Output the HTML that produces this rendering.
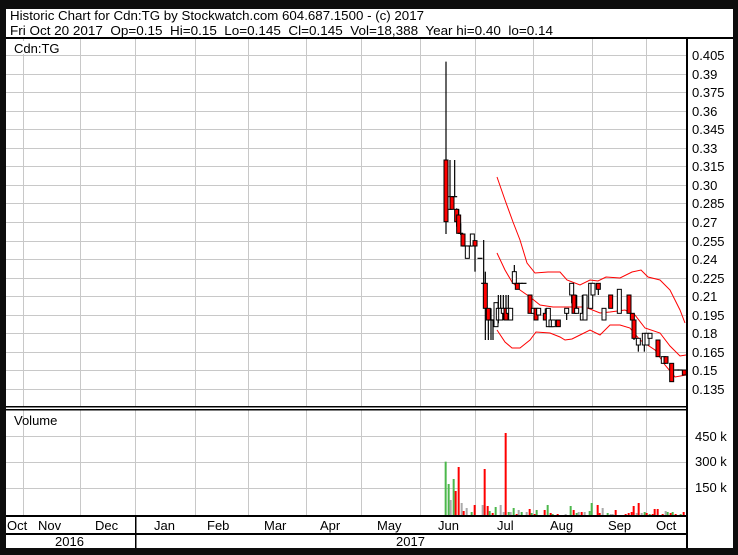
<!DOCTYPE html>
<html><head><meta charset="utf-8"><style>
html,body{margin:0;padding:0;background:#0d0d0d;width:738px;height:555px;overflow:hidden}
svg{display:block}
text{font-family:"Liberation Sans",Arial,sans-serif;font-size:13px;fill:#000;white-space:pre}
</style></head><body>
<svg id="s" width="738" height="555" xmlns="http://www.w3.org/2000/svg" xml:space="preserve">
<rect x="0" y="0" width="738" height="555" fill="#0d0d0d"/>
<rect x="6" y="9" width="727" height="539" fill="#fff"/>
<text x="10" y="20" textLength="414" lengthAdjust="spacingAndGlyphs">Historic Chart for Cdn:TG by Stockwatch.com 604.687.1500 - (c) 2017</text>
<text x="10" y="35" textLength="543" lengthAdjust="spacingAndGlyphs">Fri Oct 20 2017  Op=0.15  Hi=0.15  Lo=0.145  Cl=0.145  Vol=18,388  Year hi=0.40  lo=0.14</text>
<rect x="6" y="37" width="727" height="2" fill="#000"/>
<g id="grid" stroke="#c8c8c8" stroke-width="1"></g>
<g id="bb" fill="none" stroke="#f00" stroke-width="1">
<polyline points="497,177 505,200 513,222 520,240 527,263 535,273 548,272 560,272 567,280 580,285 590,280 598,281 606,277 620,278 632,272 641,270 648,277 660,280 670,290 680,310 685,323"/>
<polyline points="497,253 505,270 512,282 520,290 530,297 540,305 553,307 575,307 585,307 600,313 610,312 625,310 635,315 645,328 660,333 670,346 680,356 686,355"/>
<polyline points="497,330 505,342 512,348 520,348 530,340 536,332 550,333 560,337 565,340 572,339 580,335 590,330 600,335 610,325 620,325 630,328 640,340 655,350 665,365 675,377 686,375"/>
</g>
<g id="cd"></g>
<g id="vb"></g>
<rect x="12" y="41" width="50" height="13" fill="#fff"/>
<text x="14" y="53">Cdn:TG</text>
<text x="14" y="425">Volume</text>
<rect x="686" y="39" width="2" height="509" fill="#000"/>
<rect x="6" y="406" width="681" height="1.5" fill="#000"/>
<rect x="6" y="409" width="681" height="1.5" fill="#000"/>
<rect x="6" y="515" width="681" height="2" fill="#000"/>
<rect x="6" y="533" width="681" height="2" fill="#000"/>
<rect x="135" y="517" width="1.5" height="31" fill="#000"/>
<g id="lab"></g>
<text x="55" y="546">2016</text>
<text x="396" y="546">2017</text>
<text x="695" y="441">450 k</text>
<text x="695" y="466">300 k</text>
<text x="695" y="492">150 k</text>
</svg>
<script>
var NS="http://www.w3.org/2000/svg";
function el(p,t,a,txt){var e=document.createElementNS(NS,t);for(var k in a)e.setAttribute(k,a[k]);if(txt)e.textContent=txt;document.getElementById(p).appendChild(e);return e;}
var vx=[23,80,135,195,248,306,361,420,475,533,592,646];
vx.forEach(function(x){el("grid","line",{x1:x+.5,y1:39,x2:x+.5,y2:406});el("grid","line",{x1:x+.5,y1:410,x2:x+.5,y2:515});});
var labels=["0.405","0.39","0.375","0.36","0.345","0.33","0.315","0.30","0.285","0.27","0.255","0.24","0.225","0.21","0.195","0.18","0.165","0.15","0.135"];
for(var i=0;i<19;i++){var y=Math.round(55+i*18.55);el("grid","line",{x1:6,y1:y+.5,x2:686,y2:y+.5});el("lab","text",{x:692,y:y+5},labels[i]);}
[436,462,488].forEach(function(y){el("grid","line",{x1:6,y1:y+.5,x2:686,y2:y+.5});});
var mo=[["Oct",7],["Nov",38],["Dec",95],["Jan",154],["Feb",207],["Mar",264],["Apr",320],["May",377],["Jun",438],["Jul",497],["Aug",550],["Sep",608],["Oct",656]];
mo.forEach(function(m){el("lab","text",{x:m[1],y:530},m[0]);});
var C=[[78,330,515,35,552,1],[90,440,478,330,480,0],[96,440,478,440,478,1],[104,440,441,330,441,0],[110,478,515,475,530,1],[116,495,550,478,550,1],[122,550,552,520,555,0],[129,552,588,552,588,1],[134,588,589,588,589,0],[142,588,625,588,625,0],[150,588,589,588,589,0],[157,552,588,552,588,0],[165,572,588,572,665,1],[180,625,626,625,626,0],[191,700,701,570,700,0],[196,700,775,665,870,1],[205,775,810,775,870,1],[213,810,811,775,870,0],[219,810,811,810,870,0],[228,758,830,758,830,0],[235,775,810,735,820,0],[242,775,810,735,810,0],[250,775,790,735,810,0],[258,775,810,735,810,1],[265,775,790,735,810,0],[272,775,810,775,810,0],[283,665,700,645,700,0],[292,700,718,700,718,1],[300,700,701,700,701,0],[312,700,701,700,701,0],[330,735,790,735,790,1],[340,775,790,775,790,0],[348,775,810,775,810,1],[356,775,795,775,795,0],[376,790,810,775,810,1],[385,775,830,775,830,0],[393,810,830,810,830,0],[400,810,830,810,830,0],[415,810,830,810,830,1],[440,775,790,775,810,0],[455,700,735,700,760,0],[462,735,790,735,790,1],[470,775,790,735,790,0],[487,790,810,735,810,0],[495,735,810,735,810,0],[512,700,775,700,775,0],[519,700,735,700,735,0],[535,700,718,700,735,1],[552,775,810,775,810,0],[572,735,775,735,775,1],[598,718,790,718,790,0],[627,735,790,735,790,1],[637,790,810,790,810,1],[642,810,865,810,870,1],[655,865,885,865,905,0],[673,850,885,850,905,0],[681,850,885,850,885,0],[690,850,865,850,865,0],[714,870,920,870,920,1],[730,920,940,920,940,0],[738,920,940,920,940,1],[755,940,995,940,995,1],[770,960,961,960,961,0],[780,960,961,960,961,0],[793,960,975,960,975,1]];
C.forEach(function(c){var x=420+c[0]/3,t=50+c[1]/3,b=50+c[2]/3,wt=50+c[3]/3,wb=50+c[4]/3;
el("cd","line",{x1:x,y1:wt,x2:x,y2:wb,stroke:"#000","stroke-width":1.2});
if(c[2]-c[1]<3){el("cd","line",{x1:x-2.5,y1:t,x2:x+2.5,y2:t,stroke:"#000","stroke-width":1.2});}
else el("cd","rect",{x:x-2,y:t,width:4,height:b-t,fill:c[5]?"#f00":"#fff",stroke:"#000","stroke-width":1});});
var V=[[47,125,"g"],[56,192,"g"],[62,240,"a"],[71,177,"g"],[77,213,"r"],[86,141,"r"],[95,249,"a"],[101,273,"r"],[110,264,"a"],[119,285,"a"],[125,276,"g"],[134,255,"r"],[149,285,"r"],[158,255,"a"],[164,147,"r"],[173,258,"r"],[179,273,"g"],[188,279,"r"],[197,261,"g"],[203,285,"r"],[212,255,"a"],[221,276,"a"],[227,39,"r"],[236,276,"g"],[242,276,"a"],[251,264,"g"],[260,282,"r"],[266,270,"a"],[275,276,"g"],[290,276,"a"],[299,267,"r"],[305,279,"g"],[314,282,"r"],[320,270,"g"],[329,285,"a"],[344,270,"r"],[353,255,"g"],[362,279,"r"],[368,282,"g"],[383,282,"r"],[392,285,"a"],[401,285,"g"],[407,282,"a"],[416,285,"a"],[422,258,"g"],[431,270,"r"],[440,279,"g"],[446,276,"a"],[455,276,"r"],[464,276,"a"],[479,273,"g"],[485,249,"g"],[503,255,"r"],[509,279,"r"],[518,264,"a"],[524,285,"r"],[533,279,"g"],[542,282,"a"],[548,282,"a"],[557,270,"r"],[566,285,"g"],[572,285,"g"],[587,282,"r"],[596,279,"r"],[605,276,"r"],[611,258,"r"],[620,279,"a"],[626,249,"r"],[635,279,"a"],[644,276,"g"],[650,279,"r"],[659,282,"g"],[668,282,"r"],[674,267,"r"],[683,267,"r"],[698,282,"r"],[707,273,"a"],[713,276,"g"],[722,279,"r"],[728,276,"g"],[737,282,"r"],[743,285,"g"],[752,282,"g"],[761,276,"r"]];
var col={g:"#4cb84c",a:"#aaaaaa",r:"#ff0000"};
V.forEach(function(v){var x=430+v[0]/3-1,t=420+v[1]/3;el("vb","rect",{x:x,y:t,width:2,height:516-t,fill:col[v[2]]});});
</script>
</body></html>
